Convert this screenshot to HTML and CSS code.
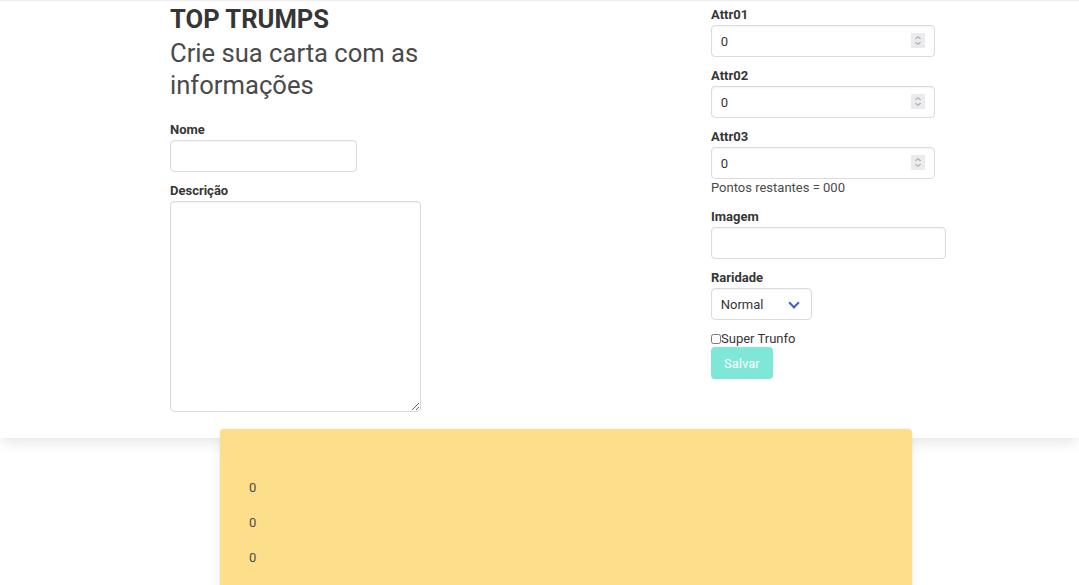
FILE: index.html
```html
<!DOCTYPE html>
<html lang="pt-BR">
<head>
<meta charset="utf-8">
<title>Top Trumps</title>
<link rel="stylesheet" href="styles.css">
</head>
<body>
<section class="panel">
  <div class="columns">
    <div class="col-left">
      <h1 class="title">TOP TRUMPS</h1>
      <h2 class="subtitle">Crie sua carta com as informações</h2>
      <div class="field">
        <label class="label" for="nome">Nome</label>
        <input class="input input-nome" id="nome" type="text">
      </div>
      <div class="field field-last">
        <label class="label" for="descricao">Descrição</label>
        <textarea class="textarea" id="descricao"></textarea>
      </div>
    </div>
    <div class="col-right">
      <div class="field">
        <label class="label" for="attr1">Attr01</label>
        <div class="number-wrap">
          <input class="input input-number" id="attr1" type="number" value="0">
          <svg class="spin" width="14" height="15" viewBox="0 0 14 15" aria-hidden="true"><rect width="14" height="15" fill="#ebebee"/><path d="M4.5 6 L7 3.5 L9.5 6 M4.5 9 L7 11.5 L9.5 9" fill="none" stroke="#8c8c8c" stroke-width="1"/></svg>
        </div>
      </div>
      <div class="field">
        <label class="label" for="attr2">Attr02</label>
        <div class="number-wrap">
          <input class="input input-number" id="attr2" type="number" value="0">
          <svg class="spin" width="14" height="15" viewBox="0 0 14 15" aria-hidden="true"><rect width="14" height="15" fill="#ebebee"/><path d="M4.5 6 L7 3.5 L9.5 6 M4.5 9 L7 11.5 L9.5 9" fill="none" stroke="#8c8c8c" stroke-width="1"/></svg>
        </div>
      </div>
      <div class="field">
        <label class="label" for="attr3">Attr03</label>
        <div class="number-wrap">
          <input class="input input-number" id="attr3" type="number" value="0">
          <svg class="spin" width="14" height="15" viewBox="0 0 14 15" aria-hidden="true"><rect width="14" height="15" fill="#ebebee"/><path d="M4.5 6 L7 3.5 L9.5 6 M4.5 9 L7 11.5 L9.5 9" fill="none" stroke="#8c8c8c" stroke-width="1"/></svg>
        </div>
        <p class="help">Pontos restantes = 000</p>
      </div>
      <div class="field">
        <label class="label" for="imagem">Imagem</label>
        <input class="input input-image" id="imagem" type="text">
      </div>
      <div class="field">
        <label class="label" for="raridade">Raridade</label>
        <div class="select">
          <select id="raridade">
            <option>Normal</option>
            <option>Raro</option>
            <option>Muito raro</option>
          </select>
        </div>
      </div>
      <label class="checkbox"><input type="checkbox" class="check">Super Trunfo</label>
      <button class="button" type="button" disabled>Salvar</button>
    </div>
  </div>
</section>
<div class="card">
  <p class="card-value">0</p>
  <p class="card-value">0</p>
  <p class="card-value">0</p>
</div>
</body>
</html>
```
FILE: styles.css
```css
* { box-sizing: border-box; }

html, body {
  margin: 0;
  padding: 0;
  background: #fff;
  font-family: Roboto, "Liberation Sans", sans-serif;
  font-size: 13px;
  color: #4a4a4a;
}

.panel {
  background: #fff;
  border-top: 1px solid #ececec;
  box-shadow: 0 6px 13px -2px rgba(10, 10, 10, 0.1);
  padding: 4px 0 26px 170px;
}

.columns {
  display: grid;
  grid-template-columns: 260px 235px;
  column-gap: 281px;
  align-items: start;
}

.col-right {
  padding-top: 1px;
  display: flex;
  flex-direction: column;
  align-items: flex-start;
}

.title {
  margin: 0;
  font-size: 25.6px;
  line-height: 29px;
  font-weight: 700;
  color: #363636;
}

.subtitle {
  margin: 3px 0 20px;
  font-size: 25.6px;
  line-height: 32px;
  font-weight: 400;
  color: #4a4a4a;
}

.field {
  margin-bottom: 10px;
}

.field-last {
  margin-bottom: 0;
}

.label {
  display: block;
  font-weight: 700;
  font-size: 13px;
  line-height: 18px;
  margin-bottom: 1px;
  color: #363636;
}

.input,
.textarea,
.select select {
  display: block;
  font-family: inherit;
  font-size: 13px;
  color: #363636;
  background: #fff;
  border: 1px solid #dbdbdb;
  border-radius: 4px;
  box-shadow: inset 0 1px 2px rgba(10, 10, 10, 0.05);
  padding: 0 8.75px;
  outline: none;
}

.input {
  height: 32px;
}

.input-nome { width: 187px; }
.input-number { width: 224px; -moz-appearance: textfield; }
.input-image { width: 235px; }

.input-number::-webkit-inner-spin-button,
.input-number::-webkit-outer-spin-button {
  -webkit-appearance: none;
  margin: 0;
}

.number-wrap {
  position: relative;
  width: 224px;
}

.spin {
  position: absolute;
  top: 8px;
  right: 10px;
  display: block;
}

.textarea {
  width: 251px;
  height: 211px;
  padding: 8px 8.75px;
  resize: vertical;
}

.help {
  margin: -1px 0 1px;
  font-size: 13px;
  line-height: 19px;
  color: #4a4a4a;
}

.select {
  position: relative;
  display: inline-block;
}

.select select {
  appearance: none;
  -webkit-appearance: none;
  width: 101px;
  height: 32px;
  padding-right: 32px;
  cursor: pointer;
}

.select::after {
  content: "";
  position: absolute;
  top: 50%;
  right: 14px;
  width: 6px;
  height: 6px;
  margin-top: -5px;
  border: 2px solid #485fc7;
  border-top: 0;
  border-right: 0;
  transform: rotate(-45deg);
  pointer-events: none;
}

.checkbox {
  display: flex;
  align-items: center;
  font-size: 13px;
  line-height: 18px;
  color: #363636;
}

.check {
  margin: 0;
  width: 10px;
  height: 10px;
}

.button {
  height: 32px;
  margin-top: -1px;
  padding: 0 12px;
  font-family: inherit;
  font-size: 13px;
  color: #fff;
  background: #00d1b2;
  opacity: 0.5;
  border: 1px solid transparent;
  border-radius: 4px;
}

.card {
  margin: -9px 0 0 220px;
  width: 692px;
  min-height: 170px;
  background: #fdde8a;
  border-radius: 4px 4px 0 0;
  box-shadow: 0 6px 13px -2px rgba(10, 10, 10, 0.1), 0 0 0 1px rgba(10, 10, 10, 0.02);
  padding: 49px 29px 10px;
}

.card-value {
  margin: 0 0 15.5px;
  line-height: 19.5px;
  font-size: 13px;
  color: #4a4a4a;
}
```
